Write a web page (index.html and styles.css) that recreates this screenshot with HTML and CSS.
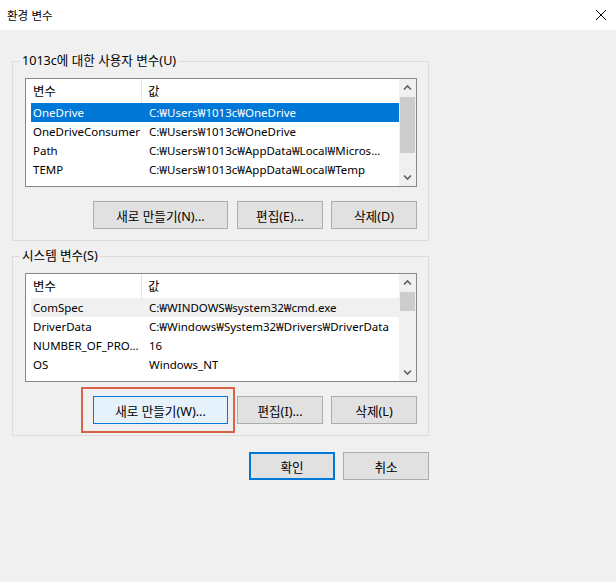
FILE: index.html
```html
<!DOCTYPE html>
<html lang="ko">
<head>
<meta charset="utf-8">
<title>환경 변수</title>
<link rel="stylesheet" href="styles.css">
</head>
<body>
<div class="titlebar">
  <span class="title">환경 변수</span>
  <span class="close"><svg width="12" height="12" viewBox="0 0 12 12"><path d="M1 1 L11 11 M11 1 L1 11" stroke="#000" stroke-width="1" fill="none"/></svg></span>
</div>
<div class="content">
  <fieldset class="group">
    <legend>1013c에 대한 사용자 변수(U)</legend>
    <div class="listbox">
      <div class="list">
        <div class="head"><div class="hc1">변수</div><div class="hc2">값</div></div>
        <div class="row sel"><div class="c1">OneDrive</div><div class="c2">C:₩Users₩1013c₩OneDrive</div></div>
        <div class="row"><div class="c1">OneDriveConsumer</div><div class="c2">C:₩Users₩1013c₩OneDrive</div></div>
        <div class="row"><div class="c1">Path</div><div class="c2">C:₩Users₩1013c₩AppData₩Local₩Micros...</div></div>
        <div class="row"><div class="c1">TEMP</div><div class="c2">C:₩Users₩1013c₩AppData₩Local₩Temp</div></div>
      </div>
      <div class="scrollbar">
        <div class="arrow"><svg width="17" height="17" viewBox="0 0 17 17"><polyline points="5,10.5 8.5,7 12,10.5" fill="none" stroke="#606060" stroke-width="1.6"/></svg></div>
        <div class="track"><div class="thumb big"></div></div>
        <div class="arrow"><svg width="17" height="17" viewBox="0 0 17 17"><polyline points="5,6.5 8.5,10 12,6.5" fill="none" stroke="#606060" stroke-width="1.6"/></svg></div>
      </div>
    </div>
    <div class="btnrow">
      <button class="btn wide">새로 만들기(N)...</button>
      <button class="btn">편집(E)...</button>
      <button class="btn">삭제(D)</button>
    </div>
  </fieldset>

  <fieldset class="group second">
    <legend>시스템 변수(S)</legend>
    <div class="listbox">
      <div class="list">
        <div class="head"><div class="hc1">변수</div><div class="hc2">값</div></div>
        <div class="row inactive"><div class="c1">ComSpec</div><div class="c2">C:₩WINDOWS₩system32₩cmd.exe</div></div>
        <div class="row"><div class="c1">DriverData</div><div class="c2">C:₩Windows₩System32₩Drivers₩DriverData</div></div>
        <div class="row"><div class="c1">NUMBER_OF_PRO...</div><div class="c2">16</div></div>
        <div class="row"><div class="c1">OS</div><div class="c2">Windows_NT</div></div>
      </div>
      <div class="scrollbar">
        <div class="arrow"><svg width="17" height="17" viewBox="0 0 17 17"><polyline points="5,10.5 8.5,7 12,10.5" fill="none" stroke="#606060" stroke-width="1.6"/></svg></div>
        <div class="track"><div class="thumb small"></div></div>
        <div class="arrow"><svg width="17" height="17" viewBox="0 0 17 17"><polyline points="5,6.5 8.5,10 12,6.5" fill="none" stroke="#606060" stroke-width="1.6"/></svg></div>
      </div>
    </div>
    <div class="btnrow">
      <span class="annot"><button class="btn wide hot">새로 만들기(W)...</button></span>
      <button class="btn">편집(I)...</button>
      <button class="btn">삭제(L)</button>
    </div>
  </fieldset>

  <div class="dlgbtns">
    <button class="btn default">확인</button>
    <button class="btn">취소</button>
  </div>
</div>
</body>
</html>
```

FILE: styles.css
```css
* { box-sizing: border-box; }

body {
  margin: 0;
  width: 616px;
  height: 582px;
  overflow: hidden;
  background: #f0f0f0;
  font-family: "Noto Sans", "Noto Sans CJK KR", sans-serif;
  font-size: 11.5px;
  color: #000;
}

.titlebar {
  height: 30px;
  background: #fff;
  display: flex;
  align-items: center;
  justify-content: space-between;
  padding: 0 9px 0 7px;
}

.title {
  font-family: "Noto Sans CJK KR", sans-serif;
  font-size: 11.5px;
}

.close {
  display: flex;
  width: 12px;
  height: 12px;
}

.content {
  padding: 23px 0 0 12px;
  width: 429px;
}

.group {
  margin: 0;
  width: 417px;
  min-width: 0;
  border: 1px solid #dcdcdc;
  padding: 9px 11px 11px 12px;
}

.group.second {
  margin-top: 7px;
}

.group legend {
  padding: 0 2px;
  margin-left: -5px;
  line-height: 16px;
  font-size: 12.6px;
}

.listbox {
  width: 392px;
  height: 109px;
  border: 1px solid #828790;
  background: #fff;
  display: flex;
}

.list {
  flex: 1;
  overflow: hidden;
  min-width: 0;
}

.head {
  display: flex;
  height: 24px;
  align-items: center;
  font-size: 12.4px;
}

.hc1 {
  width: 116px;
  height: 100%;
  padding-left: 7px;
  display: flex;
  align-items: center;
  border-right: 1px solid #e5e5e5;
}

.hc2 {
  padding-left: 6px;
}

.row {
  display: flex;
  height: 19px;
  align-items: center;
  margin-left: 5px;
  white-space: nowrap;
}

.row .c1 {
  width: 118px;
  padding-left: 2px;
  overflow: hidden;
}

.row .c2 {
  overflow: hidden;
}

.row.sel {
  background: #0078d7;
  color: #fff;
}

.row.inactive {
  background: #f0f0f0;
}

.scrollbar {
  width: 17px;
  background: #f0f0f0;
  display: flex;
  flex-direction: column;
}

.arrow {
  height: 17px;
  display: flex;
}

.track {
  flex: 1;
  padding: 1px 1px 0 1px;
}

.thumb {
  background: #cdcdcd;
  width: 15px;
}

.thumb.big { height: 56px; }
.thumb.small { height: 19px; }

.btnrow {
  display: flex;
  justify-content: flex-end;
  margin-top: 14px;
}

.btn {
  height: 28px;
  width: 86px;
  margin: 0 0 0 8px;
  padding: 0;
  border: 1px solid #adadad;
  background: #e1e1e1;
  font-family: "Noto Sans", "Noto Sans CJK KR", sans-serif;
  font-size: 12.6px;
  color: #000;
}

.btn.wide {
  width: 135px;
  margin-right: 1px;
}

.btn.hot {
  background: #e5f1fb;
  border-color: #0078d7;
}

.annot {
  position: relative;
  display: flex;
}

.annot::after {
  content: "";
  position: absolute;
  top: -9px;
  bottom: -9px;
  left: -4px;
  right: -6px;
  border: 2px solid #d9634a;
  pointer-events: none;
}

.dlgbtns {
  display: flex;
  justify-content: flex-end;
  margin-top: 16px;
  width: 417px;
}

.btn.default {
  border: 2px solid #0078d7;
}
```
